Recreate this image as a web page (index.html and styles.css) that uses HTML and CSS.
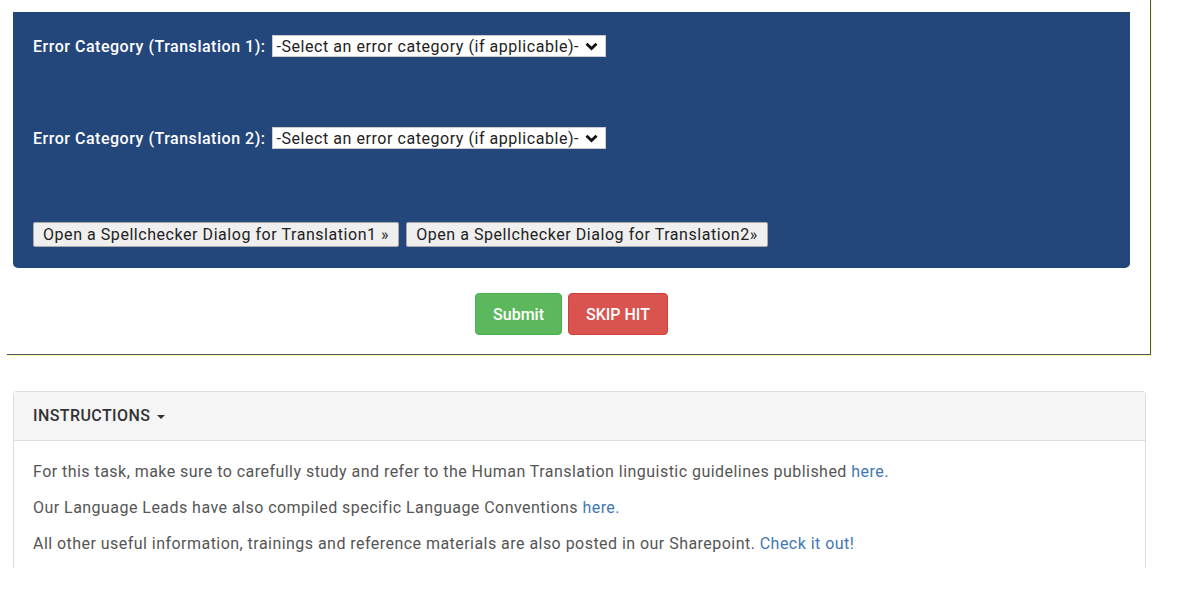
FILE: index.html
```html
<!DOCTYPE html>
<html lang="en">
<head>
  <meta charset="UTF-8">
  <title>Translation HIT</title>
  <link rel="stylesheet" href="styles.css">
</head>
<body>

<div class="hit-frame">
  <div class="task-panel">
    <div class="field-row">
      <label class="field-label">Error Category (Translation 1):</label>
      <span class="fake-select">
        -Select an error category (if applicable)-
        <svg class="chev" width="13" height="9" viewBox="0 0 13 9"><path d="M1.5 1.8 L6.5 6.6 L11.5 1.8" fill="none" stroke="#111" stroke-width="2.8"/></svg>
      </span>
    </div>

    <div class="field-row">
      <label class="field-label">Error Category (Translation 2):</label>
      <span class="fake-select">
        -Select an error category (if applicable)-
        <svg class="chev" width="13" height="9" viewBox="0 0 13 9"><path d="M1.5 1.8 L6.5 6.6 L11.5 1.8" fill="none" stroke="#111" stroke-width="2.8"/></svg>
      </span>
    </div>

    <div class="spell-row">
      <button class="spell-btn">Open a Spellchecker Dialog for Translation1 &raquo;</button>
      <button class="spell-btn">Open a Spellchecker Dialog for Translation2&raquo;</button>
    </div>
  </div>

  <div class="actions">
    <button class="btn btn-submit">Submit</button>
    <button class="btn btn-skip">SKIP HIT</button>
  </div>
</div>

<div class="instructions">
  <div class="instructions-head">
    INSTRUCTIONS <span class="caret"></span>
  </div>
  <div class="instructions-body">
    <p>For this task, make sure to carefully study and refer to the Human Translation linguistic guidelines published <a href="#">here.</a></p>
    <p>Our Language Leads have also compiled specific Language Conventions <a href="#">here.</a></p>
    <p>All other useful information, trainings and reference materials are also posted in our Sharepoint. <a href="#">Check it out!</a></p>
  </div>
</div>

</body>
</html>
```

FILE: styles.css
```css
body {
  font-family: 'Roboto', 'Liberation Sans', sans-serif;
  margin: 0;
  background: #fff;
  color: #333;
}

.hit-frame {
  margin-left: 7px;
  width: 1117px;
  padding: 12px 20px 19px 6px;
  border-right: 1px solid #4a5670;
  border-bottom: 1px solid #4a5670;
  box-shadow: 1px 1px 0 #ffff9a;
}

.task-panel {
  display: flex;
  flex-direction: column;
  background: #23467b;
  border-radius: 0 0 5px 5px;
  padding: 23px 20px 21px 20px;
}

.field-row {
  display: flex;
  align-items: center;
  height: 22px;
  margin-bottom: 70px;
}

.field-label {
  color: #fff;
  font-size: 16px;
  font-weight: 500;
  letter-spacing: 0.52px;
  margin-right: 6px;
}

.fake-select {
  display: inline-flex;
  align-items: center;
  gap: 6px;
  height: 22px;
  background: #fff;
  color: #222;
  font-size: 16px;
  letter-spacing: 0.55px;
  padding: 0 7px 0 4px;
  border: 1px solid #ccc;
  box-sizing: border-box;
}

.spell-row {
  display: flex;
  gap: 7px;
  margin-top: 3px;
}

.spell-btn {
  font-family: inherit;
  font-size: 16px;
  letter-spacing: 0.55px;
  color: #222;
  background: #efefef;
  border: 1px solid #a8a8a8;
  border-radius: 2px;
  height: 25px;
  padding: 0 9px;
  cursor: pointer;
}

.actions {
  display: flex;
  justify-content: center;
  gap: 6px;
  padding-top: 25px;
}

.btn {
  font-family: inherit;
  font-size: 16px;
  font-weight: 500;
  color: #fff;
  border: 1px solid transparent;
  border-radius: 4px;
  height: 42px;
  padding: 0 17px;
  cursor: pointer;
}

.btn-submit {
  background: #5cb85c;
  border-color: #4cae4c;
}

.btn-skip {
  background: #d9534f;
  border-color: #d43f3a;
}

.instructions {
  margin: 36px 0 0 13px;
  width: 1131px;
  border: 1px solid #dddddd;
  border-bottom: none;
  border-radius: 4px 4px 0 0;
}

.instructions-head {
  background: #f5f5f5;
  border-bottom: 1px solid #dddddd;
  height: 48px;
  line-height: 48px;
  padding-left: 19px;
  font-size: 16px;
  font-weight: 500;
  letter-spacing: 0.4px;
  color: #333;
}

.caret {
  display: inline-block;
  width: 0;
  height: 0;
  margin-left: 2px;
  vertical-align: middle;
  border-top: 4px solid #333;
  border-left: 4px solid transparent;
  border-right: 4px solid transparent;
}

.instructions-body {
  padding: 20px 20px 13px 19px;
  font-size: 16px;
  letter-spacing: 0.46px;
  color: #555;
}

.instructions-body p {
  margin: 0 0 14px 0;
  line-height: 22px;
}

.instructions-body p:last-child {
  margin-bottom: 0;
}

.instructions-body a {
  color: #3f77b3;
  text-decoration: none;
}
```
